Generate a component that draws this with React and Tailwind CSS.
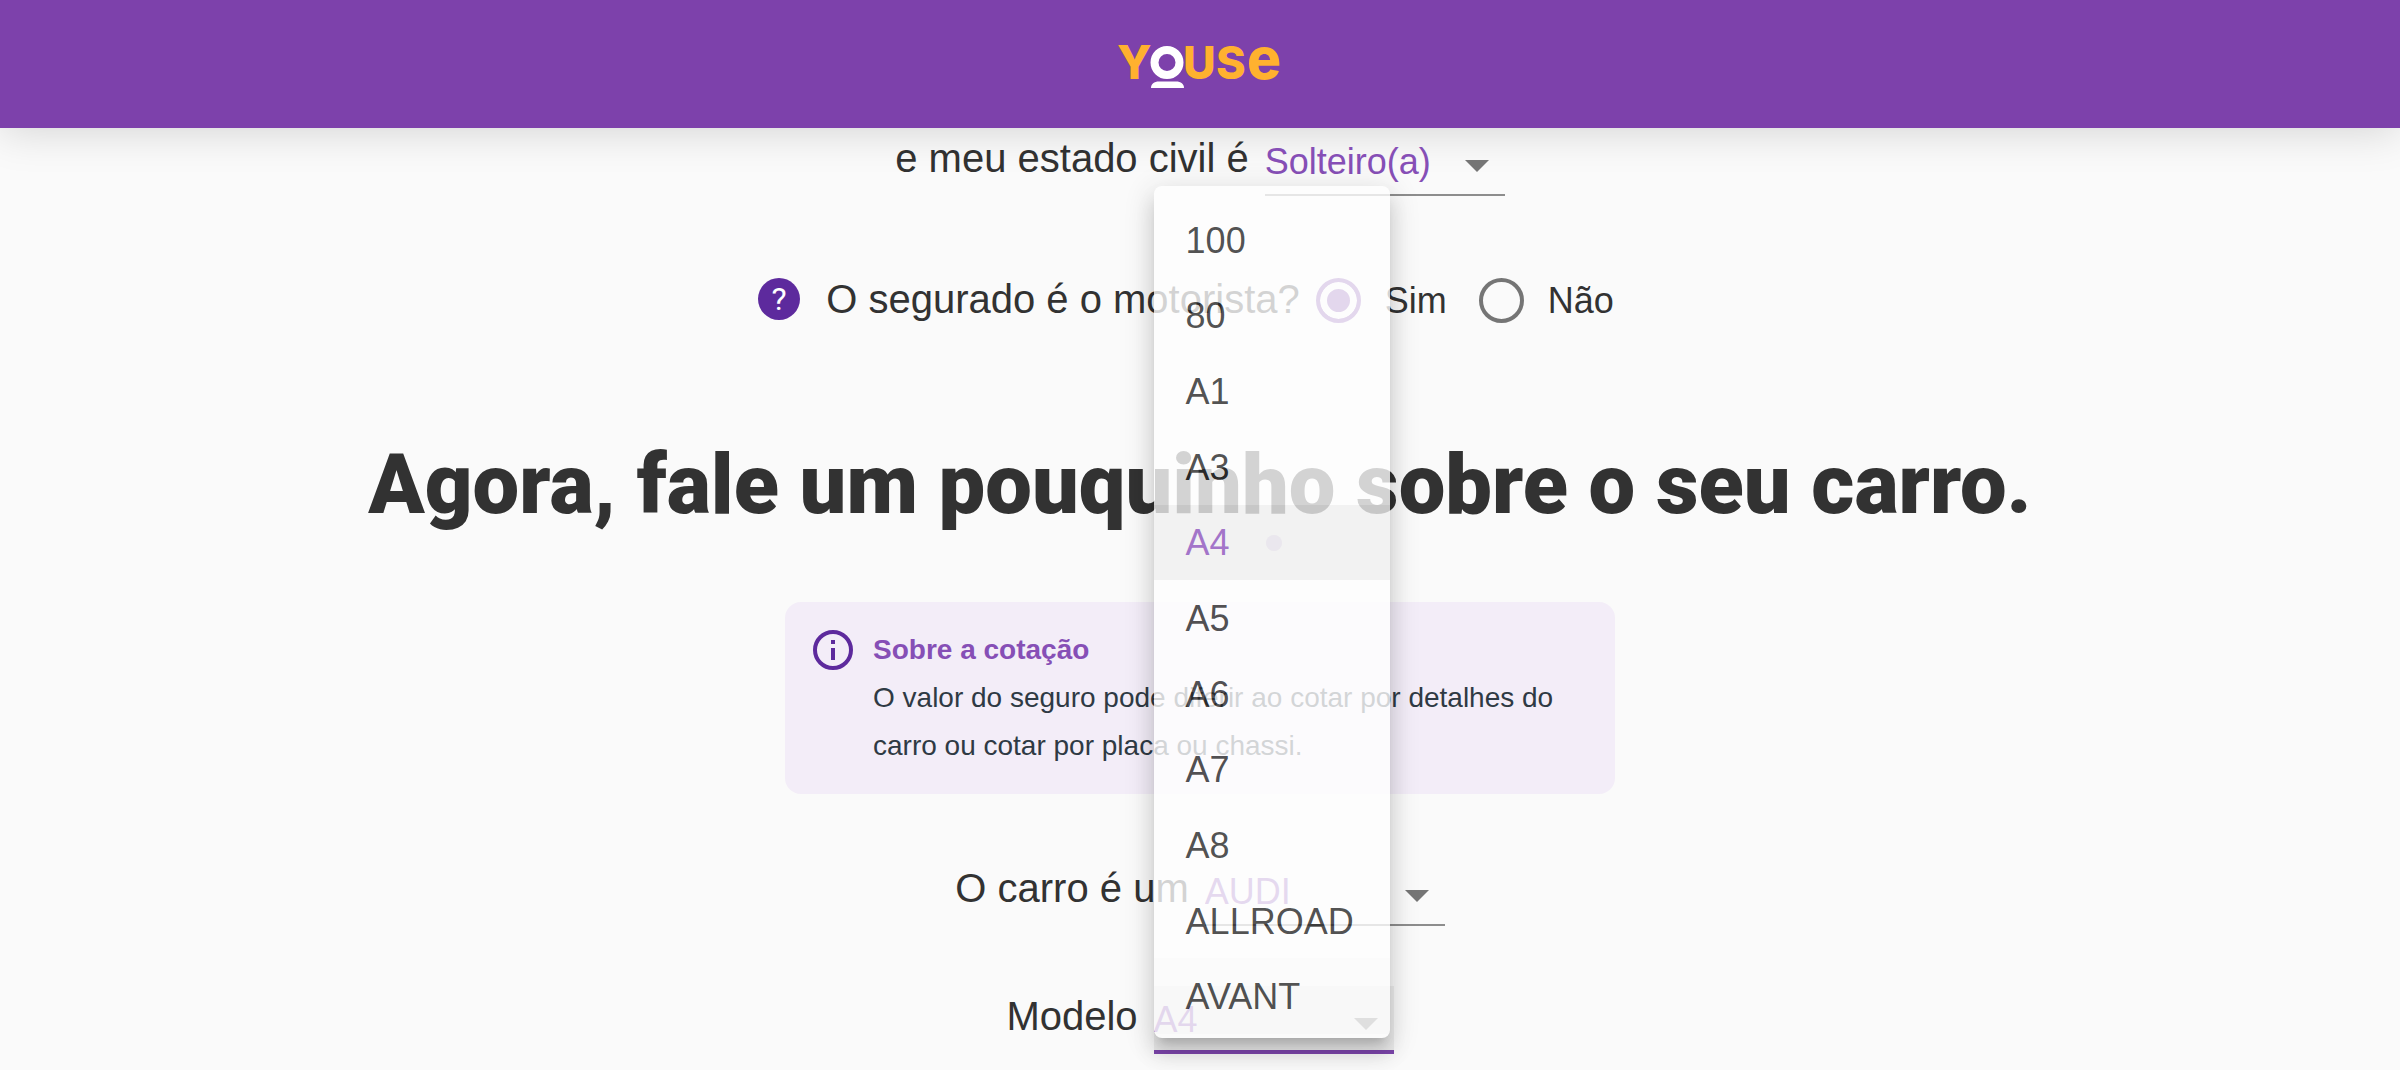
import { useState } from "react";

const MODELS = ["100", "80", "A1", "A3", "A4", "A5", "A6", "A7", "A8", "ALLROAD", "AVANT"];

function Logo() {
  return (
    <svg className="overflow-visible" width="168" height="48" viewBox="0 0 168 48" role="img" aria-label="Youse">
      <g fill="#ffb12f" fontFamily="Inter, sans-serif" fontWeight="800">
        <text x="1" y="39" fontSize="46">Y</text>
        <text x="67" y="39" fontSize="45">U</text>
        <text x="100" y="39" fontSize="45">S</text>
        <text x="131" y="39" fontSize="57">e</text>
      </g>
      <ellipse cx="51" cy="22.500" rx="12.500" ry="12.500" fill="none" stroke="#fff" strokeWidth="8" />
      <path d="M35 48c0-4 3-6.500 8-6.500h17c5 0 8 2.500 8 6.500z" fill="#fff" />
    </svg>
  );
}

function Field({ id, label, value, options, onChange, active, children }) {
  return (
    <div className="flex items-center justify-center gap-4">
      <label htmlFor={id} className="pb-2 text-[40px] leading-[48px]">
        {label}
      </label>
      <div className="relative">
        <select
          id={id}
          value={value}
          onChange={(e) => onChange(e.target.value)}
          className={
            active
              ? "block h-[68px] w-60 appearance-none border-b-4 border-[#7d46ac] bg-black/5 pt-1 pr-12 text-[36px] text-[#864fb6] outline-none"
              : "block h-[68px] w-60 appearance-none border-b-2 border-[#8d8d8d] bg-transparent pt-0.5 pr-12 text-[36px] text-[#864fb6] outline-none"
          }
        >
          {options.map((o) => (
            <option key={o}>{o}</option>
          ))}
        </select>
        <svg
          className="pointer-events-none absolute top-8 right-4"
          width="24"
          height="12"
          viewBox="0 0 24 12"
          fill="#757575"
          aria-hidden="true"
        >
          <path d="M0 0h24L12 12z" />
        </svg>
        {children}
      </div>
    </div>
  );
}

function Radio({ label, value, current, onChange }) {
  return (
    <label className="mr-8 flex items-center gap-6 pt-1 text-[36px] leading-[44px]">
      <input
        type="radio"
        name="driver"
        value={value}
        checked={current === value}
        onChange={() => onChange(value)}
        className="size-[45px] appearance-none rounded-full border-4 border-[#757575] checked:border-[#7d46ac] checked:bg-[#7d46ac] checked:shadow-[inset_0_0_0_7px_#fafafa]"
      />
      {label}
    </label>
  );
}

function ModelMenu({ selected, onSelect }) {
  return (
    <div className="absolute bottom-4 left-0 z-10 w-[236px] rounded-lg bg-white pt-4 pb-1 opacity-[0.79] shadow-[0_10px_10px_-6px_rgba(0,0,0,0.2),0_16px_20px_2px_rgba(0,0,0,0.14),0_6px_28px_4px_rgba(0,0,0,0.12)]">
      <ul role="listbox" aria-label="Modelo" className="flex h-[832px] flex-col text-[36px] leading-[44px]">
        {MODELS.map((m) => (
          <li
            key={m}
            role="option"
            aria-selected={m === selected}
            onClick={() => onSelect(m)}
            className="flex flex-1 cursor-pointer items-center gap-9 px-8 pt-0.5 text-black/87 last:bg-black/1 aria-selected:bg-black/6 aria-selected:text-[#8c52bd]"
          >
            {m}
            {m === selected && <span className="size-4 rounded-full bg-[#6f42b0]/8" />}
          </li>
        ))}
      </ul>
    </div>
  );
}

export default function App() {
  const [status, setStatus] = useState("Solteiro(a)");
  const [driver, setDriver] = useState("sim");
  const [brand, setBrand] = useState("AUDI");
  const [model, setModel] = useState("A4");

  return (
    <div className="min-h-screen bg-[#fafafa] font-['Liberation_Sans',Arial,sans-serif] text-[#323232]">
      <header className="sticky top-0 flex h-32 items-center justify-center bg-[#7d41ab] shadow-[0_4px_40px_rgba(0,0,0,0.15)]">
        <a href="#inicio">
          <Logo />
        </a>
      </header>
      <main className="flex flex-col pb-4">
        <Field
          id="status"
          label="e meu estado civil é"
          value={status}
          onChange={setStatus}
          options={["Solteiro(a)", "Casado(a)", "Divorciado(a)"]}
        />

        <fieldset className="mt-[78px] flex h-[68px] items-center justify-center pl-1">
          <button
            type="button"
            aria-label="Ajuda"
            className="mr-[26px] flex size-[42px] items-center justify-center rounded-full bg-[#5d2a9d] font-[Roboto,sans-serif] text-[32px] leading-none text-white"
          >
            ?
          </button>
          <span className="mr-4 text-[40px] leading-[48px]">O segurado é o motorista?</span>
          <Radio label="Sim" value="sim" current={driver} onChange={setDriver} />
          <Radio label="Não" value="nao" current={driver} onChange={setDriver} />
        </fieldset>

        <h1 className="mt-[94px] text-center font-[Roboto,sans-serif] text-[83px] leading-[98px] font-black">
          Agora, fale um pouquinho sobre o seu carro.
        </h1>

        <section className="mx-auto mt-[68px] flex w-[830px] gap-5 rounded-2xl bg-[#f3edf8] px-7 py-6 text-[28px] leading-[48px]">
          <svg className="mt-1 shrink-0" width="40" height="40" viewBox="0 0 40 40" aria-hidden="true">
            <circle cx="20" cy="20" r="18" fill="none" stroke="#5d2a9d" strokeWidth="4" />
            <path d="M18 10h4v4h-4zM18 18h4v12h-4z" fill="#5d2a9d" />
          </svg>
          <div>
            <h2 className="font-bold text-[#864fb6]">Sobre a cotação</h2>
            <p className="text-[#2f3a44]">
              O valor do seguro pode diferir ao cotar por detalhes do carro ou cotar por placa ou chassi.
            </p>
          </div>
        </section>

        <div className="mt-16 flex flex-col gap-[60px]">
          <Field id="brand" label="O carro é um" value={brand} onChange={setBrand} options={["AUDI", "BMW", "FIAT"]} />
          <Field id="model" label="Modelo" value={model} onChange={setModel} options={MODELS} active>
            <ModelMenu selected={model} onSelect={setModel} />
          </Field>
        </div>
      </main>
    </div>
  );
}
